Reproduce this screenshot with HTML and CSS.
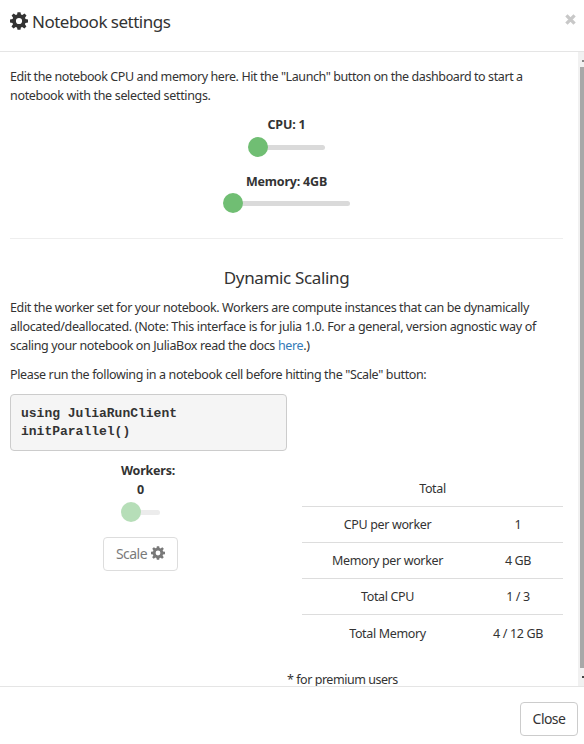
FILE: index.html
```html
<!DOCTYPE html>
<html lang="en">
<head>
<meta charset="utf-8">
<title>Notebook settings</title>
<link rel="stylesheet" href="styles.css">
</head>
<body>
<svg class="defs" width="0" height="0">
  <symbol id="gear" viewBox="0 0 18 18">
    <path fill="currentColor" fill-rule="evenodd" d="M7.500 0.300h3l.5 2.300 1.300.5L14.500 1.600l2 2-1.500 2.200.5 1.300 2.500.4v3l-2.600.5-.5 1.300 1.500 2.200-2 2-2.200-1.500-1.300.5-.4 2.200h-3l-.5-2.300-1.300-.5-2.200 1.500-2-2 1.500-2.200-.5-1.300L0 10.500v-3L2.600 7l.5-1.300L1.600 3.500l2-2L5.800 3l1.300-.5zM9 5.900a3.100 3.100 0 1 0 0 6.200a3.100 3.100 0 1 0 0-6.200z"/>
  </symbol>
</svg>
<div class="modal">
  <header class="header">
    <svg class="gear"><use href="#gear"/></svg>
    <h1 class="title">Notebook settings</h1>
    <svg class="dismiss" viewBox="0 0 10 10"><path d="M1.300 1.300l7.400 7.400M8.700 1.300L1.300 8.700" stroke="#c8c8c8" stroke-width="3"/></svg>
  </header>
  <main class="body">
    <div class="content">
      <p class="para"><span class="l1">Edit the notebook CPU and memory here. Hit the "Launch" button on the dashboard to start a</span><br><span class="l2">notebook with the selected settings.</span></p>
      <div class="field">
        <div class="label cpu-label">CPU: 1</div>
        <div class="slider cpu"><i class="knob"></i></div>
      </div>
      <div class="field">
        <div class="label mem-label">Memory: 4GB</div>
        <div class="slider mem"><i class="knob"></i></div>
      </div>
      <hr class="rule">
      <h2 class="subtitle">Dynamic Scaling</h2>
      <p class="para"><span class="l3">Edit the worker set for your notebook. Workers are compute instances that can be dynamically</span><br><span class="l4">allocated/deallocated. (Note: This interface is for julia 1.0. For a general, version agnostic way of</span><br><span class="l5">scaling your notebook on JuliaBox read the docs <a class="link">here</a>.)</span></p>
      <p class="para"><span class="l6">Please run the following in a notebook cell before hitting the "Scale" button:</span></p>
      <div class="columns">
        <div class="left">
          <pre class="code">using JuliaRunClient
initParallel()</pre>
          <div class="workers">
            <div class="label workers-label">Workers:</div>
            <div class="label">0</div>
            <div class="slider wrk"><i class="knob"></i></div>
            <button class="btn scale"><span>Scale</span><svg class="gear small"><use href="#gear"/></svg></button>
          </div>
        </div>
        <table class="totals">
          <colgroup><col class="name"><col class="value"></colgroup>
          <tr><td colspan="2">Total</td></tr>
          <tr><td>CPU per worker</td><td>1</td></tr>
          <tr><td>Memory per worker</td><td>4 GB</td></tr>
          <tr><td>Total CPU</td><td>1 / 3</td></tr>
          <tr><td>Total Memory</td><td>4 / 12 GB</td></tr>
        </table>
      </div>
      <p class="note">* for premium users</p>
    </div>
    <div class="scrollbar"><i class="up"></i><i class="thumb"></i><i class="down"></i></div>
  </main>
  <footer class="footer"><button class="btn close">Close</button></footer>
</div>
</body>
</html>
```
FILE: styles.css
```css
* { box-sizing: border-box; }
body { margin: 0; background: #fff; color: #333; font: 12.5px/19px "Noto Sans", sans-serif; }
.defs { display: block; height: 0; }
.modal { display: flex; flex-direction: column; width: 584px; height: 744px; overflow: hidden; }
.header { display: flex; align-items: center; height: 52px; padding: 0 8px 7px 10px; border-bottom: 1px solid #e5e5e5; }
.gear { width: 18px; height: 18px; flex: none; margin-top: -2px; }
.title { margin: 0 auto 0 4px; font-size: 17px; line-height: 24px; font-weight: 400; white-space: nowrap; letter-spacing: -.51px; }
.dismiss { width: 11px; height: 11px; margin-top: -5px; }
.body { display: flex; height: 634px; overflow: hidden; }
.content { width: 578px; padding: 15px 15px 0 10px; }
.para { margin: 0 0 10px; white-space: nowrap; }
.l1 { letter-spacing: -.41px; }
.l2 { letter-spacing: -.33px; }
.l3 { letter-spacing: -.38px; }
.l4 { letter-spacing: -.34px; }
.l5, .l6 { letter-spacing: -.36px; }
.link { color: #337ab7; }
.field { display: flex; flex-direction: column; align-items: center; height: 57px; }
.label { font-weight: 700; text-align: center; letter-spacing: -.2px; }
.slider { display: flex; align-items: center; height: 20px; margin-top: 3px; }
.slider::after { content: ""; flex: 1; height: 5px; margin-left: -4px; border-radius: 0 3px 3px 0; background: #dadada; }
.knob { position: relative; z-index: 1; flex: none; width: 20px; height: 20px; border-radius: 50%; background: #70be73; }
.cpu { width: 77px; }
.mem { width: 127px; margin-top: 2px; }
.wrk { width: 39px; opacity: .5; }
.rule { height: 1px; margin: 9px 0 0; border: 0; background: #eee; }
.subtitle { margin: 27px 0 9px; font-size: 17px; line-height: 23px; font-weight: 400; text-align: center; letter-spacing: -.35px; }
.columns { display: flex; height: 257px; }
.left { width: 277px; }
.code { height: 57px; margin: 0; padding: 10px 10px 9px; border: 1px solid #ccc; border-radius: 4px; background: #f5f5f5; font: 700 13px/18px "Liberation Mono", monospace; }
.workers { display: flex; flex-direction: column; align-items: center; width: 261px; padding-top: 10px; }
.workers-label { margin-left: 15px; }
.btn { display: flex; align-items: center; justify-content: center; height: 34px; padding: 0; border: 1px solid #ccc; border-radius: 4px; background: #fff; color: #333; font: 14px/20px "Noto Sans", sans-serif; letter-spacing: -.55px; }
.scale { width: 75px; margin-top: 15px; gap: 4px; opacity: .65; }
.small { width: 14px; height: 14px; }
.totals { width: 261px; height: 181px; margin: 76px 0 0 15px; border-collapse: collapse; table-layout: fixed; text-align: center; letter-spacing: -.35px; }
.totals td { height: 36px; padding: 0; }
.totals tr:first-child td { padding-top: 1px; }
.totals tr + tr td { border-top: 1px solid #ddd; }
.name { width: 171px; }
.value { width: 90px; }
.note { margin: 19px 0 0 277px; letter-spacing: -.46px; }
.scrollbar { display: flex; flex-direction: column; align-items: flex-end; width: 6px; height: 634px; background: #f1f1f1; }
.up { width: 2px; height: 2px; margin: 8px 0 5px; background: #888; }
.thumb { width: 4px; height: 601px; background: #a8a8a8; }
.down { width: 2px; height: 2px; margin-top: 8px; background: #444; }
.footer { display: flex; justify-content: flex-end; height: 58px; padding: 15px 6px 0; border-top: 1px solid #e5e5e5; }
.close { width: 58px; }
```
